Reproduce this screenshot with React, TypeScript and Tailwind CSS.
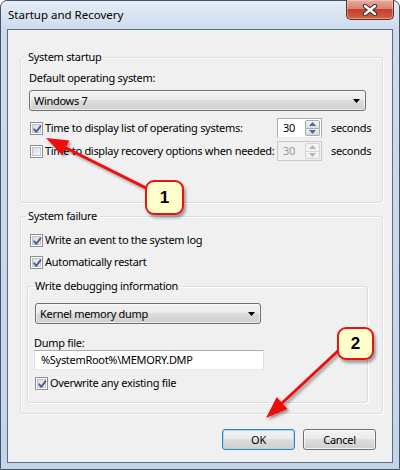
import React from "react";

function CheckBox({ checked }: { checked?: boolean }) {
  return (
    <div className="w-[13px] h-[13px] shrink-0 border border-[#8e8f8f] bg-white p-[1px] relative">
      <div className="w-full h-full border border-[#c3c6cc] bg-[linear-gradient(135deg,#d9dbdf_0%,#f4f4f4_100%)]" />
      {checked && (
        <svg className="absolute left-0 top-0" width="13" height="13" viewBox="0 0 13 13">
          <path d="M3.2 6.3 L5.3 8.8 L9.6 3.2" fill="none" stroke="#4a5e8e" strokeWidth="1.9" strokeLinecap="round" strokeLinejoin="round" />
        </svg>
      )}
    </div>
  );
}

function Spinner({ disabled }: { disabled?: boolean }) {
  const arrow = disabled ? "#b4b4b4" : "#4d6a9e";
  return (
    <div
      className={`flex shrink-0 h-[20px] w-[45px] border ${
        disabled ? "border-[#c9c9c9] bg-[#f0f0f0] text-[#9a9a9a]" : "border-[#abadb3] border-b-[#e3e9ef] bg-white text-black"
      }`}
    >
      <div className="flex-1 flex items-center pl-[5px]">30</div>
      <div className="w-[17px] h-full flex flex-col p-[1px] gap-0">
        <div
          className={`flex-1 flex items-center justify-center rounded-t-[2px] border ${
            disabled ? "border-[#d5d5d5] bg-[#f4f4f4]" : "border-[#a9a9a9] bg-[linear-gradient(to_bottom,#f5f5f5,#dedede)]"
          }`}
        >
          <svg width="7" height="4" viewBox="0 0 7 4">
            <polygon points="0,4 3.5,0 7,4" fill={arrow} />
          </svg>
        </div>
        <div
          className={`flex-1 flex items-center justify-center rounded-b-[2px] border border-t-0 ${
            disabled ? "border-[#d5d5d5] bg-[#f4f4f4]" : "border-[#a9a9a9] bg-[linear-gradient(to_bottom,#f0f0f0,#d8d8d8)]"
          }`}
        >
          <svg width="7" height="4" viewBox="0 0 7 4">
            <polygon points="0,0 7,0 3.5,4" fill={arrow} />
          </svg>
        </div>
      </div>
    </div>
  );
}

function Dropdown({ text, width }: { text: string; width: string }) {
  return (
    <div
      className={`${width} h-[21px] flex items-center justify-between pl-[4px] pr-[5px] border border-[#707070] rounded-[3px] bg-[linear-gradient(to_bottom,#f2f2f2_0%,#ebebeb_50%,#dddddd_50%,#cfcfcf_100%)] shadow-[inset_0_0_0_1px_rgba(255,255,255,0.6)]`}
    >
      <span>{text}</span>
      <svg width="7" height="4" viewBox="0 0 7 4">
        <polygon points="0,0 7,0 3.5,4" fill="#000" />
      </svg>
    </div>
  );
}

function Button({ label, isDefault }: { label: string; isDefault?: boolean }) {
  return (
    <div
      className={`w-[73px] h-[21px] flex items-center justify-center rounded-[3px] border bg-[linear-gradient(to_bottom,#f2f2f2_0%,#ebebeb_50%,#dddddd_50%,#cfcfcf_100%)] ${
        isDefault
          ? "border-[#3c7fb1] shadow-[inset_0_0_0_1px_#a6dbf6]"
          : "border-[#707070] shadow-[inset_0_0_0_1px_rgba(255,255,255,0.7)]"
      }`}
    >
      {label}
    </div>
  );
}

function Callout({ n, className }: { n: string; className: string }) {
  return (
    <div
      className={`absolute ${className} flex items-center justify-center rounded-[9px] border-[2px] border-[#ee1111] bg-[#ffffcc] shadow-[2px_3px_3px_rgba(0,0,0,0.35)] font-['Liberation_Sans',sans-serif] font-bold text-[17px] tracking-normal text-black`}
    >
      {n}
    </div>
  );
}

export default function App() {
  return (
    <div className="w-[400px] h-[470px] relative overflow-hidden font-['Noto_Sans',sans-serif] text-[11px] tracking-[-0.3px] leading-[16px] text-black">
      <div className="w-full h-full flex flex-col border border-[#47535f] rounded-t-[7px] bg-[linear-gradient(to_bottom,#e4edf7_0px,#cddcee_28px,#c3d5ea_100%)] px-[6px] pb-[6px]">
        <div className="h-[28px] flex items-start shrink-0">
          <span className="pl-[1px] mt-[6px] text-[11.5px] tracking-normal">Startup and Recovery</span>
          <div className="ml-auto -mr-[1px] -mt-[1px] w-[48px] h-[20px] flex items-center justify-center rounded-b-[5px] border border-t-0 border-[#6b2a20] bg-[linear-gradient(to_bottom,#e8aa9c_0%,#d88571_45%,#c3412c_50%,#d2614a_100%)] shadow-[inset_0_0_0_1px_rgba(255,255,255,0.35)]">
            <svg width="16" height="12" viewBox="0 0 16 12">
              <path d="M3 2 L13 10 M13 2 L3 10" stroke="#3a2a2a" strokeWidth="4.4" strokeLinecap="round" />
              <path d="M3 2 L13 10 M13 2 L3 10" stroke="#ffffff" strokeWidth="2.4" strokeLinecap="round" />
            </svg>
          </div>
        </div>

        <div className="flex-1 border border-[#5e6d7d] bg-[#f0f0f0] flex flex-col pt-[19px] pl-[12px] pr-[9px]">
          {/* System startup */}
          <fieldset className="min-w-0 border border-[#d5dfe5] rounded-[3px] pl-[8px] pr-[16px] pt-[5px] pb-[41px] shadow-[inset_1px_1px_0_#fff,1px_1px_0_#fff]">
            <legend className="px-[2px] -ml-[3px] leading-[16px]">System startup</legend>
            <div className="leading-[16px]">Default operating system:</div>
            <div className="mt-[4px]">
              <Dropdown text="Windows 7" width="w-full" />
            </div>
            <div className="mt-[7px] flex items-center h-[20px] -mr-[16px]">
              <div className="ml-[1px]">
                <CheckBox checked />
              </div>
              <span className="ml-[2px] w-[232px] shrink-0 whitespace-nowrap">Time to display list of operating systems:</span>
              <Spinner />
              <span className="ml-[9px] whitespace-nowrap">seconds</span>
            </div>
            <div className="mt-[3px] flex items-center h-[20px] -mr-[16px]">
              <div className="ml-[1px]">
                <CheckBox />
              </div>
              <span className="ml-[2px] w-[232px] shrink-0 whitespace-nowrap">Time to display recovery options when needed:</span>
              <Spinner disabled />
              <span className="ml-[9px] whitespace-nowrap">seconds</span>
            </div>
          </fieldset>

          {/* System failure */}
          <fieldset className="min-w-0 mt-[5px] border border-[#d5dfe5] rounded-[3px] pl-[6px] pr-[14px] pt-[8px] pb-[10px] shadow-[inset_1px_1px_0_#fff,1px_1px_0_#fff]">
            <legend className="px-[2px] -ml-[1px] leading-[16px]">System failure</legend>
            <div className="flex items-center h-[16px] ml-[3px]">
              <CheckBox checked />
              <span className="ml-[2px]">Write an event to the system log</span>
            </div>
            <div className="mt-[6px] flex items-center h-[16px] ml-[3px]">
              <CheckBox checked />
              <span className="ml-[2px]">Automatically restart</span>
            </div>

            <fieldset className="min-w-0 mt-[8px] border border-[#d5dfe5] rounded-[3px] pl-[7px] pr-[8px] pt-[9px] pb-[11px] shadow-[inset_1px_1px_0_#fff,1px_1px_0_#fff]">
              <legend className="px-[2px] -ml-[2px] leading-[16px]">Write debugging information</legend>
              <Dropdown text="Kernel memory dump" width="w-[226px]" />
              <div className="mt-[12px] leading-[14px] -ml-[1px]">Dump file:</div>
              <div className="-ml-[1px] w-[230px] h-[20px] flex items-center pl-[6px] bg-white border border-[#abadb3] border-b-[#e3e9ef] border-x-[#dbdfe6]">
                %SystemRoot%\MEMORY.DMP
              </div>
              <div className="mt-[5px] flex items-center h-[16px]">
                <CheckBox checked />
                <span className="ml-[2px]">Overwrite any existing file</span>
              </div>
            </fieldset>
          </fieldset>

          <div className="mt-[15px] flex justify-end gap-[8px] pr-[7px]">
            <Button label="OK" isDefault />
            <Button label="Cancel" />
          </div>
        </div>
      </div>

      {/* Annotations */}
      <svg className="absolute left-0 top-0 pointer-events-none" width="400" height="470" viewBox="0 0 400 470">
        <defs>
          <filter id="sh" x="-20%" y="-20%" width="140%" height="140%">
            <feDropShadow dx="2" dy="2" stdDeviation="1.5" floodColor="#000" floodOpacity="0.4" />
          </filter>
        </defs>
        <g filter="url(#sh)">
          <line x1="148" y1="189" x2="64" y2="147" stroke="#ee1111" strokeWidth="3" />
          <polygon points="46,138 69.3,140.6 62.1,155" fill="#ee1111" />
          <line x1="340" y1="349" x2="280" y2="405" stroke="#ee1111" strokeWidth="3" />
          <polygon points="266,418 276.7,397.1 287.5,408.9" fill="#ee1111" />
        </g>
      </svg>
      <Callout n="1" className="left-[145px] top-[180px] w-[39px] h-[35px]" />
      <Callout n="2" className="left-[337px] top-[327px] w-[37px] h-[33px]" />
    </div>
  );
}
